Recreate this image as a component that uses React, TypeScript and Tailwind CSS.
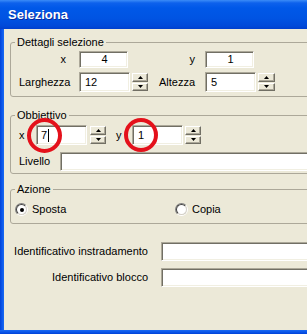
import React from 'react';

const sunken =
  'bg-white border border-t-[#aca899] border-l-[#aca899] border-r-white border-b-white shadow-[inset_1px_1px_0_#716f64,inset_-1px_-1px_0_#f1efe2]';

function Arrow({ up }: { up?: boolean }) {
  return (
    <svg width="5" height="3" viewBox="0 0 5 3" className="block">
      {up ? <polygon points="2.5,0 5,3 0,3" fill="#000" /> : <polygon points="0,0 5,0 2.5,3" fill="#000" />}
    </svg>
  );
}

function Spin({ w = 'w-[16px]' }: { w?: string }) {
  return (
    <div className={`flex h-[20px] shrink-0 flex-col gap-[1px] py-[1px] ${w}`}>
      {[true, false].map((up) => (
        <div
          key={String(up)}
          className="flex h-[9px] items-center justify-center border border-t-white border-l-white border-r-[#716f64] border-b-[#716f64] bg-[#ece9d8] shadow-[inset_-1px_-1px_0_#aca899]"
        >
          <Arrow up={up} />
        </div>
      ))}
    </div>
  );
}

function Radio({ checked }: { checked?: boolean }) {
  return (
    <div className="flex h-[13px] w-[13px] shrink-0 items-center justify-center rounded-full border border-t-[#808080] border-l-[#808080] border-r-white border-b-white">
      <div className="flex h-[11px] w-[11px] items-center justify-center rounded-full border border-t-[#404040] border-l-[#404040] border-r-[#d4d0c8] border-b-[#d4d0c8] bg-white">
        {checked && <div className="h-[4px] w-[4px] rounded-full bg-black" />}
      </div>
    </div>
  );
}

function Group({ title, children, className }: { title: string; children: React.ReactNode; className?: string }) {
  return (
    <fieldset className={`w-[310px] shrink-0 rounded-[3px] border border-[#aca899] ${className ?? ''}`}>
      <legend className="ml-[4px] px-[2px] leading-[13px]">{title}</legend>
      {children}
    </fieldset>
  );
}

export default function App() {
  return (
    <div className="flex h-[334px] w-[307px] flex-col overflow-hidden font-['Liberation_Sans',Arial,sans-serif] text-[11px] text-[#000]">
      {/* Title bar */}
      <div className="flex h-[29px] shrink-0 items-center bg-[linear-gradient(to_bottom,#3b8cf7_0px,#0d61ec_3px,#0058e8_8px,#0054e3_18px,#0049d9_26px,#003fcd_29px)] pl-[8px] pt-[1px]">
        <span className="text-[13px] font-bold text-white [text-shadow:1px_1px_0_#0a2a9c]">Seleziona</span>
      </div>

      <div className="flex min-h-0 flex-1">
        {/* Left frame */}
        <div className="w-[4px] shrink-0 bg-[linear-gradient(to_right,#0042d8,#0a56ea_50%,#1a6af2)]" />

        <div className="flex min-w-0 flex-1 flex-col overflow-hidden bg-[#ece9d8] pl-[6px]">
          {/* Dettagli selezione */}
          <Group title="Dettagli selezione" className="mt-[7px] pb-[4px]">
            <div className="mt-[2px] flex h-[17px] items-center pl-[8px]">
              <span className="w-[48px] shrink-0 pr-[1px] text-right">x</span>
              <div className={`ml-[12px] flex h-[17px] w-[49px] shrink-0 items-center justify-center pl-[2px] ${sunken}`}>4</div>
              <span className="ml-[31px] w-[36px] shrink-0 text-right">y</span>
              <div className={`ml-[10px] flex h-[17px] w-[49px] shrink-0 items-center justify-center pl-[2px] ${sunken}`}>1</div>
            </div>
            <div className="mt-[4px] flex h-[20px] items-center pl-[8px]">
              <span className="w-[48px] shrink-0 whitespace-nowrap">Larghezza</span>
              <div className={`ml-[12px] flex h-[20px] w-[51px] shrink-0 items-center pl-[5px] ${sunken}`}>12</div>
              <div className="ml-[2px]">
                <Spin />
              </div>
              <span className="ml-[11px] w-[36px] shrink-0 whitespace-nowrap">Altezza</span>
              <div className={`ml-[10px] flex h-[20px] w-[51px] shrink-0 items-center pl-[5px] ${sunken}`}>5</div>
              <div className="ml-[2px]">
                <Spin w="w-[17px]" />
              </div>
            </div>
          </Group>

          {/* Obbiettivo */}
          <Group title="Obbiettivo" className="mt-[12px] pb-[2px]">
            <div className="relative mt-[3px] flex h-[20px] items-center pl-[8px]">
              <span className="w-[17px] shrink-0">x</span>
              <div className={`flex h-[20px] w-[51px] shrink-0 items-center pl-[4px] ${sunken}`}>
                7<span className="ml-[1px] h-[13px] w-[1px] bg-black" />
              </div>
              <div className="ml-[3px]">
                <Spin />
              </div>
              <span className="ml-[10px] w-[16px] shrink-0">y</span>
              <div className={`flex h-[20px] w-[51px] shrink-0 items-center pl-[5px] ${sunken}`}>1</div>
              <div className="ml-[2px]">
                <Spin />
              </div>
              {/* annotation circles */}
              <div className="pointer-events-none absolute left-[16px] top-[-7px] h-[35px] w-[35px] rounded-full border-[4px] border-[#e4111b]" />
              <div className="pointer-events-none absolute left-[113px] top-[-7px] h-[34px] w-[34px] rounded-full border-[4px] border-[#e4111b]" />
            </div>
            <div className="mt-[7px] flex h-[19px] items-center pl-[8px]">
              <span className="w-[41px] shrink-0">Livello</span>
              <div className={`h-[19px] flex-1 ${sunken}`} />
            </div>
          </Group>

          {/* Azione */}
          <Group title="Azione" className="mt-[9px] pb-[7px]">
            <div className="mt-[7px] flex h-[13px] items-center pl-[4px]">
              <div className="flex w-[160px] shrink-0 items-center">
                <Radio checked />
                <span className="ml-[4px]">Sposta</span>
              </div>
              <div className="flex items-center">
                <Radio />
                <span className="ml-[4px]">Copia</span>
              </div>
            </div>
          </Group>

          <div className="mt-[18px] flex h-[19px] items-center">
            <span className="w-[138px] shrink-0 whitespace-nowrap text-right">Identificativo instradamento</span>
            <div className={`ml-[13px] h-[19px] w-[200px] shrink-0 ${sunken}`} />
          </div>
          <div className="mt-[7px] flex h-[19px] items-center">
            <span className="w-[138px] shrink-0 whitespace-nowrap text-right">Identificativo blocco</span>
            <div className={`ml-[13px] h-[19px] w-[200px] shrink-0 ${sunken}`} />
          </div>
        </div>
      </div>

      {/* Bottom frame */}
      <div className="h-[4px] shrink-0 bg-[linear-gradient(to_bottom,#1a6af2,#0a56ea_50%,#0042d8)]" />
    </div>
  );
}
